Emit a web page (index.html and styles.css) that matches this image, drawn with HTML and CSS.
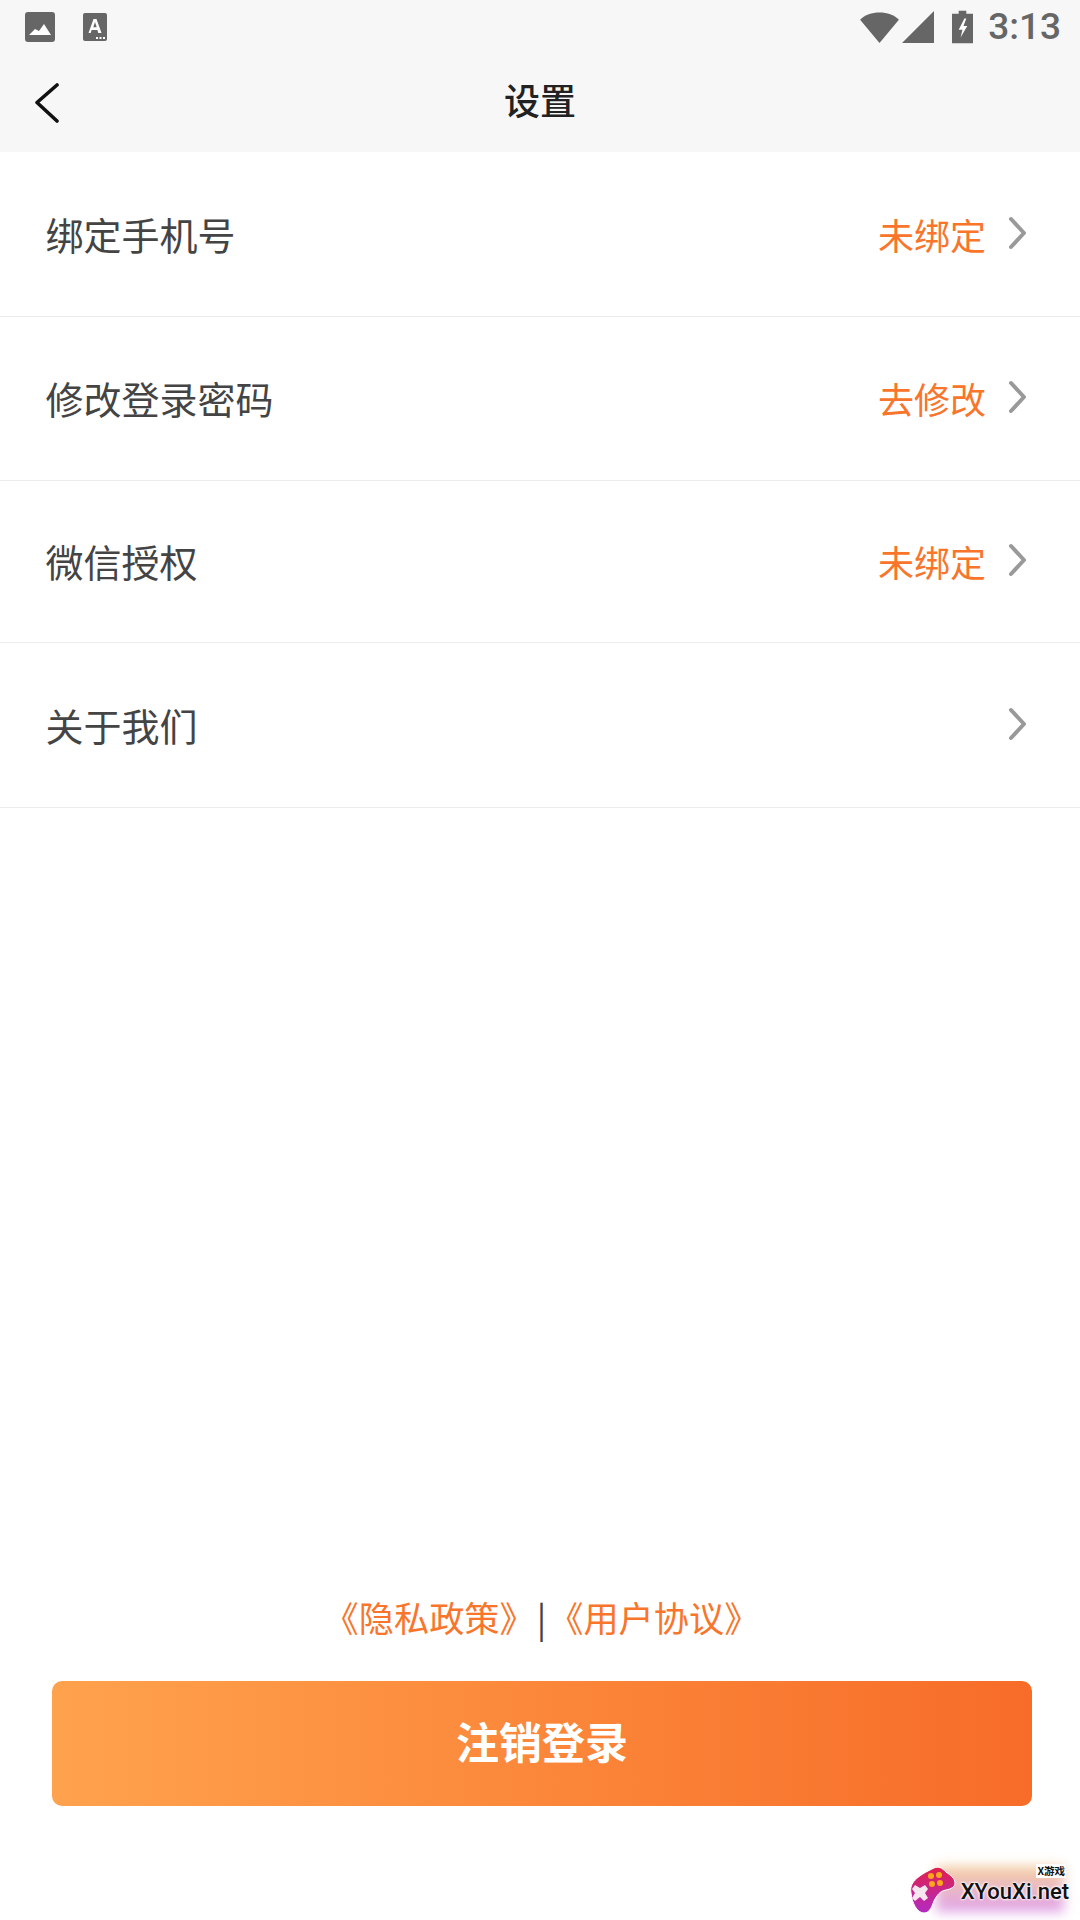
FILE: index.html
```html
<!DOCTYPE html>
<html lang="zh">
<head>
<meta charset="utf-8">
<title>设置</title>
<link rel="stylesheet" href="styles.css">
</head>
<body>
<div class="page">
  <header class="top">
    <div class="status">
      <div class="status-left">
        <svg class="ic-pic" viewBox="0 0 30 30"><rect x="0" y="0" width="30" height="30" rx="3" fill="#666"/><path d="M4 23l6-6 4 2 5-7 7 11z" fill="#fff"/></svg>
        <svg class="ic-a" viewBox="0 0 24 28"><rect width="24" height="28" rx="2" fill="#666"/><path d="M5.500 20L10.500 6h3l5 14h-3.200l-.9-3h-5.800l-.9 3zM10.300 14.300h3.400L12 9z" fill="#fff"/><path d="M13 24h2v2h-2zM16.500 24h2v2h-2zM20 24h2v2h-2z" fill="#fff"/></svg>
      </div>
      <div class="status-right">
        <svg class="ic-wifi" viewBox="0 0 40 32"><path d="M0 8C5 3 12 .5 20 .5S35 3 40 8L20 32z" fill="#666"/></svg>
        <svg class="ic-signal" viewBox="0 0 32 32"><path d="M32 0v32H0z" fill="#666"/></svg>
        <svg class="ic-batt" viewBox="0 0 22 34"><path d="M7 0h8v3h7v31H0V3h7z" fill="#666"/><path d="M13 8l-6 12h4l-2 8 7-12h-4l3-8z" fill="#fff"/></svg>
        <span class="clock">3:13</span>
      </div>
    </div>
    <div class="nav">
      <svg class="ic-back" viewBox="0 0 26 40"><path d="M23 2L3 19.500 23 38" fill="none" stroke="#111" stroke-width="3.600" stroke-linecap="round" stroke-linejoin="round"/></svg>
      <h1 class="title">设置</h1>
    </div>
  </header>

  <main class="list">
    <div class="row row-a">
      <span class="label">绑定手机号</span>
      <span class="value">未绑定</span>
      <svg class="chev" viewBox="0 0 20 34"><path d="M3 3l13 14L3 31" fill="none" stroke="#999" stroke-width="4" stroke-linecap="round" stroke-linejoin="round"/></svg>
    </div>
    <div class="row row-b">
      <span class="label">修改登录密码</span>
      <span class="value">去修改</span>
      <svg class="chev" viewBox="0 0 20 34"><path d="M3 3l13 14L3 31" fill="none" stroke="#999" stroke-width="4" stroke-linecap="round" stroke-linejoin="round"/></svg>
    </div>
    <div class="row row-c">
      <span class="label">微信授权</span>
      <span class="value">未绑定</span>
      <svg class="chev" viewBox="0 0 20 34"><path d="M3 3l13 14L3 31" fill="none" stroke="#999" stroke-width="4" stroke-linecap="round" stroke-linejoin="round"/></svg>
    </div>
    <div class="row row-d">
      <span class="label">关于我们</span>
      <svg class="chev" viewBox="0 0 20 34"><path d="M3 3l13 14L3 31" fill="none" stroke="#999" stroke-width="4" stroke-linecap="round" stroke-linejoin="round"/></svg>
    </div>
  </main>

  <footer class="foot">
    <div class="links"><span class="link">《隐私政策》</span><span class="sep">|</span><span class="link">《用户协议》</span></div>
    <button class="logout"><span class="logout-text">注销登录</span></button>
  </footer>

  <div class="mark">
    <div class="mark-glow"></div>
    <svg class="mark-pad" viewBox="0 0 46 48">
      <defs><linearGradient id="padg" x1="0" y1="0" x2="0" y2="1"><stop offset="0" stop-color="#e0204a"/><stop offset="1" stop-color="#b22bc4"/></linearGradient></defs>
      <path d="M24 2c5-2 8 0 12 4 4 3 9 6 9 11 0 4-4 6-9 7-6 1-9 5-12 11-2 5-4 12-10 12C7 47 2 37 1 27-1 17 7 10 24 2z" fill="url(#padg)" stroke="#fff" stroke-width="1"/>
      <circle cx="21" cy="10" r="3" fill="#fba71b"/><circle cx="29" cy="9" r="3" fill="#fba71b"/><circle cx="22" cy="18" r="3" fill="#fba71b"/><circle cx="30" cy="17" r="3" fill="#fba71b"/>
      <path d="M5 19l5 3 5-3 3 4-3 4 3 5-4 3-4-4-5 4-3-3 3-5-3-4z" fill="#f6e6ee"/>
    </svg>
    <span class="mark-sub">X游戏</span>
    <span class="mark-name">XYouXi.net</span>
  </div>
</div>
</body>
</html>
```

FILE: styles.css
```css
* {
  box-sizing: border-box;
}

html,
body {
  margin: 0;
  padding: 0;
}

body {
  background: #fff;
  font-family: "Noto Sans CJK SC", "Noto Sans", sans-serif;
}

.page {
  position: relative;
  display: flex;
  flex-direction: column;
  width: 1080px;
  height: 1920px;
  overflow: hidden;
}

.top {
  height: 152px;
  background: #f7f7f7;
}

.status {
  display: flex;
  align-items: center;
  justify-content: space-between;
  height: 56px;
  padding: 0 19px 2px 25px;
}

.status-left {
  display: flex;
  align-items: center;
  gap: 28px;
}

.ic-pic {
  width: 30px;
  height: 30px;
}

.ic-a {
  width: 24px;
  height: 28px;
}

.status-right {
  display: flex;
  align-items: center;
}

.ic-wifi {
  width: 39px;
  height: 31px;
}

.ic-signal {
  width: 32px;
  height: 32px;
  margin-left: 3px;
}

.ic-batt {
  width: 21px;
  height: 34px;
  margin-left: 18px;
}

.clock {
  margin-left: 15px;
  font-family: Roboto, sans-serif;
  font-size: 37px;
  font-weight: 500;
  line-height: 40px;
  color: #666;
}

.nav {
  position: relative;
  display: flex;
  align-items: center;
  justify-content: center;
  height: 96px;
  padding-bottom: 11px;
}

.ic-back {
  position: absolute;
  left: 34px;
  top: 27px;
  width: 26px;
  height: 40px;
}

.title {
  margin: 0;
  font-size: 36px;
  font-weight: 500;
  line-height: 48px;
  color: #222;
}

.list {
  display: flex;
  flex-direction: column;
}

.row {
  display: flex;
  align-items: center;
  padding: 0 52px 0 45.500px;
  border-bottom: 1px solid #ececec;
}

.row-a {
  height: 165px;
}

.row-b {
  height: 164px;
  padding-bottom: 1px;
}

.row-c {
  height: 162px;
  padding-bottom: 2px;
}

.row-d {
  height: 165px;
  padding-bottom: 1px;
}

.label {
  flex: 1;
  font-size: 38px;
  line-height: 52px;
  color: #444;
}

.value {
  font-size: 36px;
  line-height: 50px;
  color: #f8752b;
}

.chev {
  width: 20px;
  height: 34px;
  margin-left: 22px;
  margin-top: -2px;
}

.foot {
  display: flex;
  flex-direction: column;
  align-items: center;
  margin-top: auto;
  padding: 0 48px 114px 52px;
}

.links {
  display: flex;
  align-items: center;
  height: 50px;
  margin-bottom: 39px;
  margin-left: -1px;
  font-size: 35.200px;
  line-height: 50px;
}

.link {
  color: #f8752b;
}

.sep {
  margin: 0 2px;
  color: #444;
}

.logout {
  width: 100%;
  height: 125px;
  padding: 0 0 8px;
  border: 0;
  border-radius: 10px;
  background: linear-gradient(90deg, #ffa24d, #f76c28);
  font-family: inherit;
  font-size: 43px;
  font-weight: 700;
  color: #fff;
}

.logout-text {
  display: block;
}

.mark {
  position: absolute;
  right: 6px;
  bottom: 0;
  width: 166px;
  height: 60px;
}

.mark-glow {
  position: absolute;
  left: 28px;
  top: 6px;
  width: 128px;
  height: 46px;
  background: linear-gradient(180deg, #f3c98f, #d98fe8);
  opacity: .85;
  filter: blur(6px);
}

.mark-pad {
  position: absolute;
  left: 2px;
  top: 6px;
  width: 46px;
  height: 48px;
}

.mark-sub {
  position: absolute;
  right: 8px;
  top: 4px;
  padding: 0 1px;
  font-size: 10.500px;
  font-weight: 700;
  line-height: 14px;
  color: #111;
  background: #fff;
}

.mark-name {
  position: absolute;
  right: 5px;
  top: 19px;
  font-family: Roboto, sans-serif;
  font-size: 22px;
  font-weight: 500;
  line-height: 26px;
  color: #111;
  text-shadow: 0 0 3px #fff, 0 0 3px #fff, 0 0 2px #fff;
}
```
